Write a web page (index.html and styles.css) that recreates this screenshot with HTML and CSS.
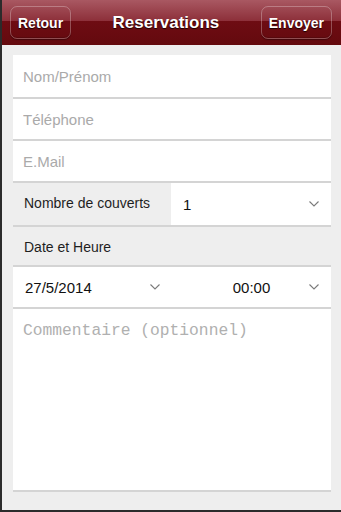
FILE: index.html
```html
<!DOCTYPE html>
<html lang="fr">

<head>
  <meta charset="UTF-8">
  <meta name="viewport" content="width=device-width, initial-scale=1.0">
  <title>Reservations</title>
  <link rel="stylesheet" href="styles.css">
</head>

<body>
  <div class="page">
    <div class="header">
      <button class="hbtn">Retour</button>
      <h1>Reservations</h1>
      <button class="hbtn">Envoyer</button>
    </div>

    <form class="content">
      <input class="field first" type="text" placeholder="Nom/Prénom">
      <input class="field" type="tel" placeholder="Téléphone">
      <input class="field" type="email" placeholder="E.Mail">

      <div class="row couverts">
        <label class="cell label">Nombre de couverts</label>
        <div class="cell select">
          <span class="value">1</span>
          <svg class="chev" width="10" height="6" viewBox="0 0 10 6"><polyline points="0.5,0.5 5,5 9.5,0.5" /></svg>
        </div>
      </div>

      <div class="row label-row">Date et Heure</div>

      <div class="row datetime">
        <div class="cell select date">
          <span class="value">27/5/2014</span>
          <svg class="chev" width="10" height="6" viewBox="0 0 10 6"><polyline points="0.5,0.5 5,5 9.5,0.5" /></svg>
        </div>
        <div class="cell select time">
          <span class="value">00:00</span>
          <svg class="chev" width="10" height="6" viewBox="0 0 10 6"><polyline points="0.5,0.5 5,5 9.5,0.5" /></svg>
        </div>
      </div>

      <textarea class="comment" placeholder="Commentaire (optionnel)"></textarea>
    </form>
  </div>
</body>

</html>
```

FILE: styles.css
```css
* {
  box-sizing: border-box;
}

body {
  margin: 0;
  font-family: "Liberation Sans", Arial, sans-serif;
}

.page {
  width: 341px;
  height: 512px;
  background-color: #eeeeee;
  border-left: 2px solid #2b2b2b;
  border-bottom: 2px solid #2b2b2b;
}

/* header bar */
.header {
  height: 45px;
  display: flex;
  align-items: center;
  justify-content: space-between;
  padding: 0 9px 0 8px;
  background: linear-gradient(#a95862 0, #8d303a 46%, #6e0c13 47%, #640a0e 100%);
}

.header h1 {
  margin: 0;
  color: white;
  font-size: 17px;
  font-weight: bold;
  text-shadow: 0 1px 1px #1a0000;
}

.hbtn {
  height: 33px;
  padding: 0 7px;
  background: transparent;
  border: 1px solid rgba(255, 255, 255, 0.28);
  border-radius: 7px;
  box-shadow: 0 1px 1px rgba(0, 0, 0, 0.35), inset 0 -1px 0 rgba(0, 0, 0, 0.15);
  color: white;
  font-family: "Liberation Sans", Arial, sans-serif;
  font-size: 14px;
  font-weight: bold;
  text-shadow: 0 1px 1px #1a0000;
  cursor: pointer;
}

/* form */
.content {
  margin: 0;
  padding: 10px 10px 0 11px;
  display: flex;
  flex-direction: column;
}

.field {
  display: block;
  width: 100%;
  height: 42px;
  margin: 0;
  padding: 0 10px;
  border: none;
  border-bottom: 2px solid #d4d4d4;
  background: white;
  font-family: "Liberation Sans", Arial, sans-serif;
  font-size: 15px;
  color: #111;
  outline: none;
}

.field.first {
  height: 44px;
}

.field::placeholder {
  color: #aaaaaa;
}

.row {
  border-bottom: 2px solid #d4d4d4;
  font-size: 14px;
  color: #1e1e1e;
}

.couverts {
  height: 44px;
  display: grid;
  grid-template-columns: 158px 1fr;
}

.datetime {
  height: 42px;
  display: grid;
  grid-template-columns: 159px 1fr;
}

.label-row {
  height: 40px;
  display: flex;
  align-items: center;
  padding: 1px 11px 0;
}

.cell {
  display: flex;
  align-items: center;
}

.cell.label {
  padding: 0 0 3px 11px;
}

.cell.select {
  background: white;
  padding: 0 12px;
  font-size: 15px;
  color: #111;
}

.value {
  flex: 1;
}

.chev polyline {
  fill: none;
  stroke: #7a7a7a;
  stroke-width: 1.1;
}

.date {
  padding: 0 18px 0 10px;
}

.time {
  padding: 0 13px 0 12px;
}

.time .value {
  text-align: center;
  padding-left: 10px;
}

.comment {
  display: block;
  width: 100%;
  height: 183px;
  margin: 0;
  padding: 12px 10px;
  border: none;
  border-bottom: 2px solid #d4d4d4;
  background: white;
  resize: none;
  font-family: "Liberation Mono", "Courier New", monospace;
  font-size: 16.3px;
  line-height: 20px;
  outline: none;
}

.comment::placeholder {
  color: #b0b0b0;
}
```
